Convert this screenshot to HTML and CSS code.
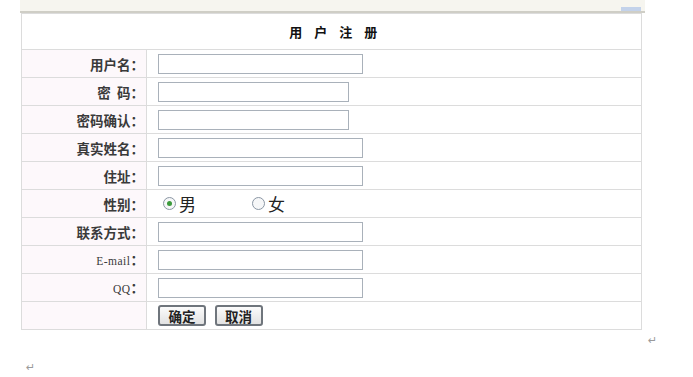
FILE: index.html
```html
<!DOCTYPE html>
<html lang="zh-CN">
<head>
<meta charset="UTF-8">
<title>用户注册</title>
<link rel="stylesheet" href="styles.css">
</head>
<body>
    <div class="toolbar-strip">
        <span class="strip-mark"></span>
    </div>
    <form class="register">
        <table class="form-table">
            <tr class="title-row">
                <th colspan="2">用 户 注 册</th>
            </tr>
            <tr>
                <td class="label">用户名：</td>
                <td class="field"><input type="text" class="wide"></td>
            </tr>
            <tr>
                <td class="label">密&nbsp;&nbsp;码：</td>
                <td class="field"><input type="password" class="narrow"></td>
            </tr>
            <tr>
                <td class="label">密码确认：</td>
                <td class="field"><input type="password" class="narrow"></td>
            </tr>
            <tr>
                <td class="label">真实姓名：</td>
                <td class="field"><input type="text" class="wide"></td>
            </tr>
            <tr>
                <td class="label">住址：</td>
                <td class="field"><input type="text" class="wide"></td>
            </tr>
            <tr>
                <td class="label">性别：</td>
                <td class="field">
                    <div class="radios">
                        <label class="radio"><span class="dot checked"></span>男</label>
                        <label class="radio"><span class="dot"></span>女</label>
                    </div>
                </td>
            </tr>
            <tr>
                <td class="label">联系方式：</td>
                <td class="field"><input type="text" class="wide"></td>
            </tr>
            <tr>
                <td class="label"><span class="latin">E-mail</span>：</td>
                <td class="field"><input type="text" class="wide"></td>
            </tr>
            <tr>
                <td class="label"><span class="latin">QQ</span>：</td>
                <td class="field"><input type="text" class="wide"></td>
            </tr>
            <tr>
                <td class="label"></td>
                <td class="field buttons">
                    <button type="button">确定</button>
                    <button type="button">取消</button>
                </td>
            </tr>
        </table>
    </form>
    <div class="mark mark-right">↵</div>
    <div class="mark mark-left">↵</div>
</body>
</html>
```

FILE: styles.css
```css
* {
    margin: 0;
    padding: 0;
    box-sizing: border-box;
}
body {
    width: 693px;
    height: 377px;
    background: #fff;
    font-family: "Noto Sans CJK SC", "DejaVu Sans", sans-serif;
    color: #222;
    overflow: hidden;
}

/* cropped window strip at the top */
.toolbar-strip {
    position: relative;
    margin-left: 20px;
    width: 625px;
    height: 13px;
    background: #f6f5ef;
    border-bottom: 2px solid #cfcec6;
}
.strip-mark {
    position: absolute;
    right: 4px;
    top: 7px;
    width: 20px;
    height: 4px;
    background: #c3d2ea;
}

/* form table */
.register {
    margin-left: 21px;
    width: 621px;
}
.form-table {
    width: 621px;
    border-collapse: collapse;
    border: 1px solid #d6d6d6;
}
.form-table td, .form-table th {
    border: 1px solid #dcdcdc;
    height: 28px;
    line-height: 16px;
    vertical-align: middle;
}
.title-row th {
    height: 36px;
    font-size: 13px;
    font-weight: bold;
    color: #111;
    text-align: center;
    letter-spacing: 4.5px;
    padding-left: 8px;
}
.label {
    width: 125px;
    background: #fdf8fb;
    text-align: right;
    padding-right: 2px;
    font-size: 13.5px;
    font-weight: bold;
    color: #3a3a3a;
}
.label .latin {
    font-family: "Liberation Serif", serif;
    font-weight: normal;
    font-size: 11.5px;
    letter-spacing: 0.5px;
}
.field {
    padding-left: 11px;
}
.field input {
    display: block;
    height: 20px;
    border: 1px solid #a9b1ba;
    background: #fff;
}
.field input.wide {
    width: 205px;
}
.field input.narrow {
    width: 191px;
}

/* gender radios */
.radios {
    display: flex;
    align-items: center;
    height: 20px;
}
.radio {
    display: flex;
    align-items: center;
    font-size: 17px;
    line-height: 20px;
    color: #222;
    margin-left: 5px;
    width: 84px;
}
.radio .dot {
    width: 13px;
    height: 13px;
    border: 1px solid #8a96a4;
    border-radius: 50%;
    margin-right: 3px;
    background: #f6f7f8;
    display: flex;
    align-items: center;
    justify-content: center;
}
.radio .dot.checked::after {
    content: "";
    width: 5px;
    height: 5px;
    border-radius: 50%;
    background: #3c9a3c;
}

/* buttons */
.buttons button {
    display: inline-block;
    vertical-align: middle;
    width: 48px;
    height: 21px;
    margin-right: 5px;
    font-family: "Noto Sans CJK SC", sans-serif;
    font-size: 13.5px;
    font-weight: bold;
    line-height: 16px;
    color: #222;
    border: 2px solid #6f757c;
    border-radius: 3px;
    background: linear-gradient(#fbfbfb, #e2e2e2);
}

/* paragraph marks */
.mark {
    position: absolute;
    font-family: "DejaVu Sans", sans-serif;
    font-size: 11px;
    color: #9a9a9a;
}
.mark-right {
    left: 648px;
    top: 334px;
}
.mark-left {
    left: 26px;
    top: 361px;
}
```
